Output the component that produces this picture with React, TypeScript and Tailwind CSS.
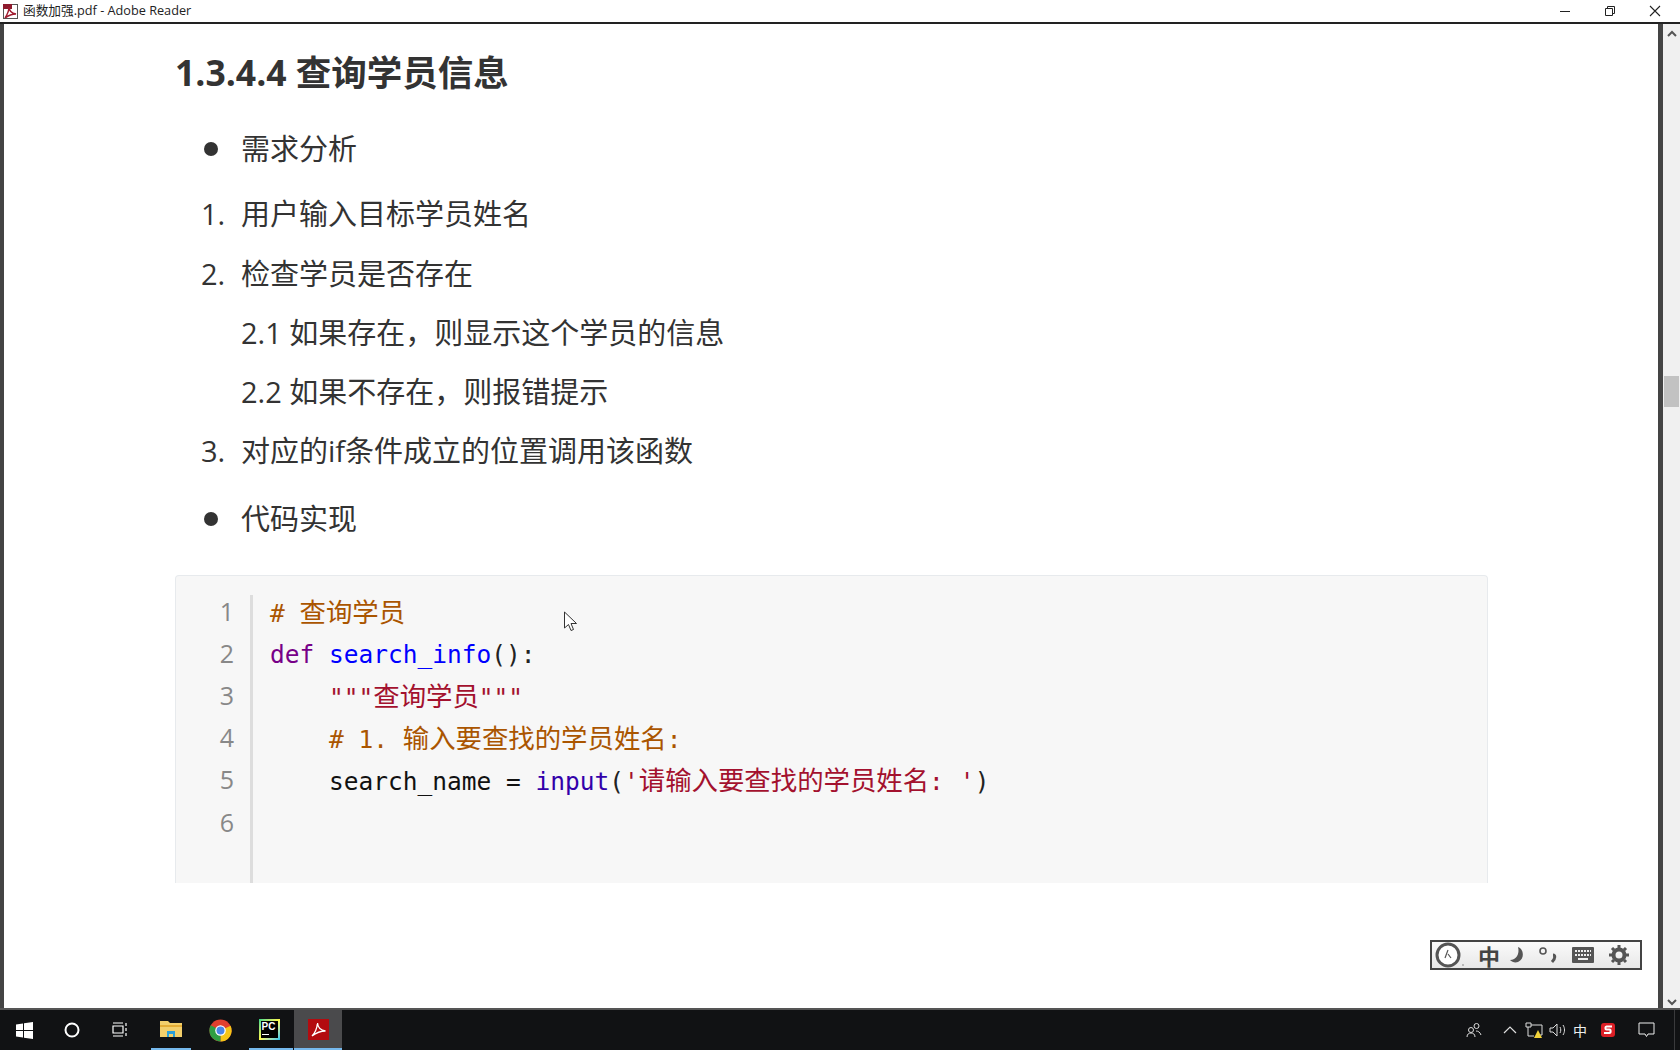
import React from "react";

const SANS = "font-['Open_Sans','Noto_Sans_CJK_SC',sans-serif]";
const MONO = "font-['DejaVu_Sans_Mono','Noto_Sans_CJK_SC',monospace]";

function TitleBar() {
  return (
    <div className="h-[24px] shrink-0 bg-white border-b-2 border-[#222] flex items-center text-[12.7px] text-[#222]">
      <svg width="17" height="17" viewBox="0 0 17 17" className="ml-[2px]">
        <rect x="1.5" y="1.5" width="14" height="14" fill="#fff" stroke="#555" strokeWidth="1" />
        <rect x="1" y="1" width="9" height="5" fill="#8e1a2d" />
        <path d="M3 15c2-3 4-7 4-11 0 4 2 6 7 7-4 0-7 1-11 4z" fill="none" stroke="#a01c30" strokeWidth="1.4" />
      </svg>
      <span className={`ml-[4px] ${SANS}`}>函数加强.pdf - Adobe Reader</span>
      <div className="ml-auto flex items-center h-full">
        <svg width="12" height="12" viewBox="0 0 12 12" className="mr-[33px]"><path d="M1 6.5h10" stroke="#222" strokeWidth="1" /></svg>
        <svg width="12" height="12" viewBox="0 0 12 12" className="mr-[33px]"><path d="M1.5 3.5h7v7h-7zM3.5 3.5v-2h7v7h-2" fill="none" stroke="#222" strokeWidth="1" /></svg>
        <svg width="12" height="12" viewBox="0 0 12 12" className="mr-[19px]"><path d="M1 1l10 10M11 1L1 11" stroke="#222" strokeWidth="1.1" /></svg>
      </div>
    </div>
  );
}

function Scrollbar() {
  return (
    <div className="w-[17px] shrink-0 bg-[#f0f0f0] flex flex-col items-center justify-between">
      <div className="w-full flex flex-col items-center">
        <svg width="12" height="10" viewBox="0 0 12 10" className="mt-[5px]"><path d="M2 7l4-4 4 4" fill="none" stroke="#555" strokeWidth="2" /></svg>
        <div className="w-[15px] h-[31px] bg-[#c2c2c2] mt-[337px]" />
      </div>
      <svg width="12" height="10" viewBox="0 0 12 10" className="mb-[1px]"><path d="M2 3l4 4 4-4" fill="none" stroke="#555" strokeWidth="2" /></svg>
    </div>
  );
}

function Bullet({ children, cls }: { children: React.ReactNode; cls: string }) {
  return (
    <div className={`flex items-center h-[40px] ${cls}`}>
      <span className="w-[14px] h-[14px] rounded-full bg-[#333] ml-[29px] mr-[23px]" />
      <span>{children}</span>
    </div>
  );
}

function Num({ n, children, cls = "mt-[19.25px]" }: { n?: string; children: React.ReactNode; cls?: string }) {
  return (
    <div className={`flex items-center h-[40px] ${cls}`}>
      <span className="w-[66px] pl-[26px] shrink-0">{n}</span>
      <span>{children}</span>
    </div>
  );
}

function C({ children }: { children: React.ReactNode }) {
  return <span className="text-[26.4px]">{children}</span>;
}

const rows: React.ReactNode[] = [
  <span className="text-[#aa5500]"># <C>查询学员</C></span>,
  <>
    <span className="text-[#770088]">def</span> <span className="text-[#0000ff]">search_info</span>
    <span className="text-[#222]">():</span>
  </>,
  <span className="text-[#a3112e]">{'    """'}<C>查询学员</C>{'"""'}</span>,
  <span className="text-[#aa5500]">{"    # 1. "}<C>输入要查找的学员姓名</C>:</span>,
  <>
    <span className="text-[#111]">{"    search_name = "}</span>
    <span className="text-[#3300aa]">input</span>
    <span className="text-[#222]">(</span>
    <span className="text-[#a3112e]">'<C>请输入要查找的学员姓名</C><span className="inline-block w-[16px]">:</span> '</span>
    <span className="text-[#222]">)</span>
  </>,
  <span>&nbsp;</span>,
];

function CodeBlock() {
  return (
    <div className="mt-[36px] h-[308px] w-[1313px] bg-[#f7f7f7] border border-b-0 border-[#e7eaed] rounded-t-[4px] overflow-hidden flex pt-[16px]">
      <div className={`w-[58px] -mt-[2px] shrink-0 text-right text-[25px] leading-[42.2px] text-[#888] ${SANS}`}>
        {[1, 2, 3, 4, 5, 6].map((n) => (
          <div key={n}>{n}</div>
        ))}
      </div>
      <div className="ml-[16px] mt-[3px] w-[3px] bg-[#dddddd] shrink-0" />
      <div className={`ml-[17px] text-[24.5px] leading-[42.2px] whitespace-pre ${MONO}`}>
        {rows.map((r, i) => (
          <div key={i} className="h-[42.2px]">{r}</div>
        ))}
      </div>
    </div>
  );
}

function Ime() {
  return (
    <div className="absolute left-[1430px] top-[940px] w-[212px] h-[30px] border-2 border-[#444] bg-gradient-to-b from-[#fafafa] to-[#e8e8e8] flex items-center text-[#444]">
      <svg width="30" height="26" viewBox="0 0 30 26" className="ml-[2px]">
        <circle cx="14" cy="13" r="11" fill="#fff" stroke="#555" strokeWidth="3" />
        <path d="M14 8l-3 8M14 12l3 4" stroke="#555" strokeWidth="1.2" fill="none" />
        <path d="M28 23h2" stroke="#888" strokeWidth="1" />
      </svg>
      <span className="ml-[14px] text-[22px] leading-none font-bold font-['Noto_Sans_CJK_SC',sans-serif]">中</span>
      <svg width="18" height="18" viewBox="0 0 18 18" className="ml-[9px]"><path d="M9 1C15 3 16 13 9 16 6 17 3 16 1 14 7 14 11 8 9 1z" fill="#555" /></svg>
      <svg width="20" height="20" viewBox="0 0 20 20" className="ml-[11px]">
        <circle cx="5" cy="6" r="3" fill="none" stroke="#555" strokeWidth="1.6" />
        <path d="M15 10c2 0 3 3 -1 7" fill="none" stroke="#555" strokeWidth="3" />
      </svg>
      <svg width="22" height="16" viewBox="0 0 22 16" className="ml-[14px]">
        <rect width="22" height="16" rx="1" fill="#555" />
        <path d="M3 4h16M3 8h16" stroke="#eee" strokeWidth="2" strokeDasharray="2 1" />
        <path d="M6 12h10" stroke="#eee" strokeWidth="2" />
      </svg>
      <svg width="20" height="20" viewBox="0 0 20 20" className="ml-[15px]">
        <circle cx="10" cy="10" r="5.5" fill="none" stroke="#555" strokeWidth="4" />
        <path d="M10 0v20M0 10h20M3 3l14 14M17 3L3 17" stroke="#555" strokeWidth="3" strokeDasharray="3 14" />
      </svg>
    </div>
  );
}

function Taskbar() {
  return (
    <div className="h-[40px] shrink-0 bg-[#111214] flex items-center relative">
      <svg width="17" height="17" viewBox="0 0 17 17" className="ml-[16px]">
        <path d="M0 2.4L7 1.4V8H0zM8 1.3L17 0V8H8zM0 9h7v6.6L0 14.6zM8 9h9v8l-9-1.3z" fill="#fff" />
      </svg>
      <svg width="16" height="16" viewBox="0 0 16 16" className="ml-[31px]">
        <circle cx="8" cy="8" r="6.5" fill="none" stroke="#fff" strokeWidth="2" />
      </svg>
      <svg width="16" height="16" viewBox="0 0 16 16" className="ml-[32px]">
        <path d="M1 4h10v7H1zM1 1h10M1 14h10M14 1v3M14 6v3M14 11v3" fill="none" stroke="#fff" strokeWidth="1.2" />
      </svg>
      <div className="ml-[23px] w-[40px] h-[40px] border-b-2 border-[#76b9ed] flex items-center justify-center">
        <svg width="22" height="20" viewBox="0 0 22 20">
          <path d="M0 2h8l2 2h12v14H0z" fill="#f3cf6b" />
          <path d="M0 6h22v2H0z" fill="#e4ad35" />
          <path d="M7 18v-6h8v6h-2v-3H9v3z" fill="#2c9fd8" />
        </svg>
      </div>
      <div className="ml-[9px] w-[40px] h-[40px] flex items-center justify-center">
        <svg width="23" height="23" viewBox="0 0 24 24">
          <circle cx="12" cy="12" r="11.5" fill="#e0402f" />
          <path d="M12 12L22.5 7A11.5 11.5 0 0 1 12 23.5z" fill="#f5c518" />
          <path d="M12 12L12 23.5A11.5 11.5 0 0 1 1.8 6.5z" fill="#2f9e44" />
          <circle cx="12" cy="12" r="5.5" fill="#fff" />
          <circle cx="12" cy="12" r="4.2" fill="#4a86e8" />
        </svg>
      </div>
      <div className="ml-[9px] w-[44px] h-[40px] pr-[4px] border-b-2 border-[#76b9ed] flex items-center justify-center">
        <div className="w-[21px] h-[21px] bg-gradient-to-br from-[#21d789] via-[#fcf84a] to-[#07c3f2] p-[2px]">
          <div className="w-full h-full bg-black text-white text-[10px] leading-[11px] font-bold font-['Liberation_Sans',sans-serif] pl-[1px]">
            PC
            <div className="w-[7px] h-[1px] bg-white mt-[2px]" />
          </div>
        </div>
      </div>
      <div className="ml-[1px] w-[48px] h-[40px] bg-[#4a4a4c] border-b-2 border-[#76b9ed] flex items-center justify-center">
        <svg width="21" height="21" viewBox="0 0 21 21">
          <rect width="21" height="21" fill="#b30b0f" />
          <path d="M4 17c3-3 5-8 5.5-13 .3 5 3 7 8 8-5 0-9 1.5-13.5 5z" fill="none" stroke="#fff" strokeWidth="1.3" />
        </svg>
      </div>
      <div className="ml-auto flex items-center">
        <svg width="16" height="16" viewBox="0 0 16 16" className="mr-[21px]">
          <circle cx="10.5" cy="4" r="2.5" fill="none" stroke="#ddd" />
          <circle cx="5" cy="8" r="2.5" fill="none" stroke="#ddd" />
          <path d="M1 15c0-3 2-4 4-4s4 1 4 4M10 9c2 0 4 1 5 4" fill="none" stroke="#ddd" />
        </svg>
        <svg width="14" height="10" viewBox="0 0 14 10" className="mr-[8px]"><path d="M1 8l6-6 6 6" fill="none" stroke="#ddd" strokeWidth="1.2" /></svg>
        <svg width="18" height="17" viewBox="0 0 18 17" className="mr-[6px]">
          <path d="M1 1h5v4H1zM3 5v9h6M6 3h11v10h-5" fill="none" stroke="#ddd" />
          <path d="M13 8l4 8H9z" fill="#f3d33b" />
        </svg>
        <svg width="18" height="16" viewBox="0 0 18 16" className="mr-[6px]">
          <path d="M1 6h3l4-4v12l-4-4H1zM11 5c1 2 1 4 0 6M14 3c2 3 2 7 0 10" fill="none" stroke="#ddd" />
        </svg>
        <span className="text-[14px] text-[#eee] mr-[13px] font-['Noto_Sans_CJK_SC',sans-serif]">中</span>
        <svg width="16" height="16" viewBox="0 0 16 16" className="mr-[22px]">
          <rect x="1" y="1" width="14" height="14" rx="3" fill="#dc1f26" />
          <path d="M12 4.5H6.5C5 4.5 5 7.5 6.5 7.5h3c1.5 0 1.5 3.5 0 3.5H4" fill="none" stroke="#fff" strokeWidth="2" />
        </svg>
        <svg width="17" height="16" viewBox="0 0 17 16" className="mr-[19px]">
          <path d="M1 1h15v11h-6l-1.5 2.5L7 12H1z" fill="none" stroke="#eee" />
        </svg>
        <div className="w-px h-[40px] bg-[#3a3a3c] mr-[5px]" />
      </div>
    </div>
  );
}

export default function App() {
  return (
    <div className="relative w-[1680px] h-[1050px] overflow-hidden flex flex-col bg-white">
      <TitleBar />
      <div className="flex-1 flex min-h-0">
        <div className="w-[4px] bg-[#444] shrink-0" />
        <main className={`flex-1 pl-[171px] ${SANS} text-[#333] text-[29px]`}>
          <h1 className="mt-[21px] text-[35.5px] leading-[54px] font-bold">1.3.4.4 查询学员信息</h1>
          <Bullet cls="mt-[30px]">需求分析</Bullet>
          <Num n="1." cls="mt-[25px]">用户输入目标学员姓名</Num>
          <Num n="2.">检查学员是否存在</Num>
          <Num>2.1 如果存在，则显示这个学员的信息</Num>
          <Num>2.2 如果不存在，则报错提示</Num>
          <Num n="3.">对应的if条件成立的位置调用该函数</Num>
          <Bullet cls="mt-[27.5px]">代码实现</Bullet>
          <CodeBlock />
        </main>
        <div className="w-[5px] bg-[#444] shrink-0" />
        <Scrollbar />
      </div>
      <div className="h-[2px] bg-[#555] shrink-0" />
      <Taskbar />
      <Ime />
      <svg width="16" height="22" viewBox="0 0 16 22" className="absolute left-[563px] top-[611px]">
        <path d="M1.5 1v16l4-3.5 2.5 6 2.5-1-2.5-6h5.5z" fill="#fff" stroke="#333" strokeWidth="1" />
      </svg>
    </div>
  );
}
